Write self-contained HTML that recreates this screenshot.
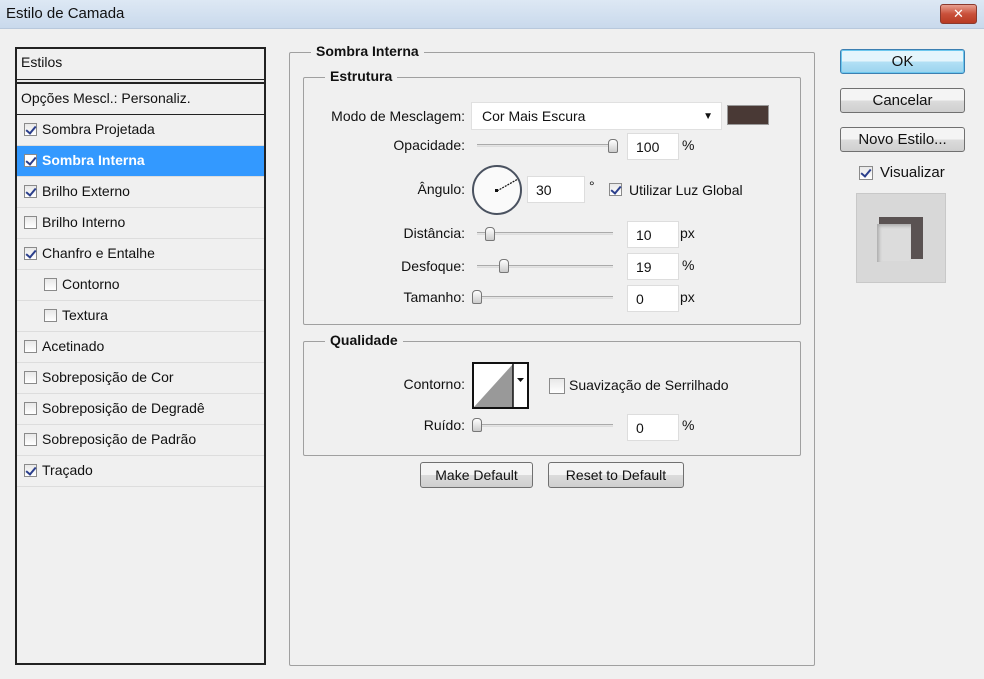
<!DOCTYPE html>
<html><head><meta charset="utf-8"><style>
*{margin:0;padding:0;box-sizing:border-box}
body{width:984px;height:679px;background:#f0f0f0;font-family:"Liberation Sans","DejaVu Sans",sans-serif;font-size:14px;color:#111;position:relative;overflow:hidden}
.a{position:absolute;white-space:nowrap}
.title{left:0;top:0;width:984px;height:29px;background:linear-gradient(#dde8f4,#c9d9ec);border-bottom:1px solid #b8c8dc}
.cb{position:absolute;width:13px;height:13px;border:1px solid #8a8a8a;background:linear-gradient(#e8e8e8,#fff)}
.cb.on::after{content:"";position:absolute;left:3px;top:0px;width:4px;height:8px;border:solid #2b3f8c;border-width:0 2px 2px 0;transform:rotate(40deg)}
.row{position:absolute;left:17px;width:247px;height:31px;border-bottom:1px solid #ddd;font-size:14px;line-height:28px}
.grp{position:absolute;border:1px solid #a0a0a0;border-radius:2px}
.lg{position:absolute;background:#f0f0f0;padding:0 5px;font-weight:bold;font-size:14px}
.lbl{position:absolute;text-align:right;width:200px;font-size:14px}
.inp{position:absolute;background:#fff;border:1px solid #ddd;width:52px;height:27px;padding-left:8px;line-height:27px;font-size:14px}
.sl{position:absolute;height:3px;border-top:1px solid #aaa;border-bottom:1px solid #ddd;background:#e4e4e4}
.th{position:absolute;width:10px;height:14px;border:1px solid #777;border-radius:4px 4px 2px 2px;background:linear-gradient(#fff,#ccc)}
.btn{position:absolute;border:1px solid #707070;border-radius:3px;background:linear-gradient(#f4f4f4 50%,#dcdcdc 50%,#cfcfcf);text-align:center;font-size:14px}
</style></head><body>
<div class="a title"></div>
<div class="a" style="left:6px;top:5px;font-size:15px">Estilo de Camada</div>
<div class="a" style="left:940px;top:4px;width:37px;height:20px;border:1px solid #8a3a2e;border-radius:3px;background:linear-gradient(#e8a090,#c9503a 50%,#b83a22);color:#fff;font-weight:bold;text-align:center;line-height:18px;font-size:13px">✕</div>

<div class="a" style="left:15px;top:47px;width:251px;height:618px;border:2px solid #222;background:#f0f0f0"></div>
<div class="a" style="left:17px;top:79px;width:247px;height:5px;border-top:1px solid #222;border-bottom:2px solid #222;background:#e8e8e8"></div>
<div class="a" style="left:21px;top:54px">Estilos</div>
<div class="a" style="left:21px;top:90px">Opções Mescl.: Personaliz.</div>
<div class="row" style="top:84px;height:31px;border-bottom:1px solid #222"></div>

<div class="row" style="top:115px"><span class="cb on" style="left:7px;top:8px"></span><span class="a" style="left:25px;top:0">Sombra Projetada</span></div>
<div class="row" style="top:146px;background:#3399ff;color:#fff;font-weight:bold"><span class="cb on" style="left:7px;top:8px;background:#fff"></span><span class="a" style="left:25px;top:0">Sombra Interna</span></div>
<div class="row" style="top:177px"><span class="cb on" style="left:7px;top:8px"></span><span class="a" style="left:25px;top:0">Brilho Externo</span></div>
<div class="row" style="top:208px"><span class="cb" style="left:7px;top:8px"></span><span class="a" style="left:25px;top:0">Brilho Interno</span></div>
<div class="row" style="top:239px"><span class="cb on" style="left:7px;top:8px"></span><span class="a" style="left:25px;top:0">Chanfro e Entalhe</span></div>
<div class="row" style="top:270px"><span class="cb" style="left:27px;top:8px"></span><span class="a" style="left:45px;top:0">Contorno</span></div>
<div class="row" style="top:301px"><span class="cb" style="left:27px;top:8px"></span><span class="a" style="left:45px;top:0">Textura</span></div>
<div class="row" style="top:332px"><span class="cb" style="left:7px;top:8px"></span><span class="a" style="left:25px;top:0">Acetinado</span></div>
<div class="row" style="top:363px"><span class="cb" style="left:7px;top:8px"></span><span class="a" style="left:25px;top:0">Sobreposição de Cor</span></div>
<div class="row" style="top:394px"><span class="cb" style="left:7px;top:8px"></span><span class="a" style="left:25px;top:0">Sobreposição de Degradê</span></div>
<div class="row" style="top:425px"><span class="cb" style="left:7px;top:8px"></span><span class="a" style="left:25px;top:0">Sobreposição de Padrão</span></div>
<div class="row" style="top:456px"><span class="cb on" style="left:7px;top:8px"></span><span class="a" style="left:25px;top:0">Traçado</span></div>

<div class="grp" style="left:289px;top:52px;width:526px;height:614px"></div>
<div class="lg" style="left:311px;top:43px">Sombra Interna</div>
<div class="grp" style="left:303px;top:77px;width:498px;height:248px"></div>
<div class="lg" style="left:325px;top:68px">Estrutura</div>

<div class="lbl" style="left:265px;top:108px">Modo de Mesclagem:</div>
<div class="a" style="left:471px;top:102px;width:251px;height:28px;background:#fff;border:1px solid #e0e0e0;padding-left:10px;line-height:27px">Cor Mais Escura<span style="position:absolute;right:8px;top:0;font-size:10px">▼</span></div>
<div class="a" style="left:727px;top:105px;width:42px;height:20px;background:#493935;border:1px solid #999"></div>

<div class="lbl" style="left:265px;top:137px">Opacidade:</div>
<div class="sl" style="left:477px;top:144px;width:140px"></div><div class="th" style="left:608px;top:139px"></div>
<div class="inp" style="left:627px;top:133px">100</div><div class="a" style="left:682px;top:137px">%</div>

<div class="lbl" style="left:265px;top:181px">Ângulo:</div>
<svg class="a" style="left:471px;top:164px" width="54" height="54"><circle cx="26" cy="26" r="24" fill="#fafafa" stroke="#4a5260" stroke-width="2"/><line x1="26" y1="27" x2="47" y2="15" stroke="#111" stroke-width="1.2" stroke-dasharray="2 1"/><rect x="24" y="25" width="3" height="3" fill="#111"/></svg>
<div class="inp" style="left:527px;top:176px;width:58px">30</div>
<div class="a" style="left:589px;top:178px">°</div>
<span class="cb on" style="left:609px;top:183px"></span><div class="a" style="left:629px;top:182px">Utilizar Luz Global</div>

<div class="lbl" style="left:265px;top:225px">Distância:</div>
<div class="sl" style="left:477px;top:232px;width:136px"></div><div class="th" style="left:485px;top:227px"></div>
<div class="inp" style="left:627px;top:221px">10</div><div class="a" style="left:680px;top:225px">px</div>

<div class="lbl" style="left:265px;top:258px">Desfoque:</div>
<div class="sl" style="left:477px;top:265px;width:136px"></div><div class="th" style="left:499px;top:259px"></div>
<div class="inp" style="left:627px;top:253px">19</div><div class="a" style="left:682px;top:257px">%</div>

<div class="lbl" style="left:265px;top:289px">Tamanho:</div>
<div class="sl" style="left:477px;top:296px;width:136px"></div><div class="th" style="left:472px;top:290px"></div>
<div class="inp" style="left:627px;top:285px">0</div><div class="a" style="left:680px;top:289px">px</div>

<div class="grp" style="left:303px;top:341px;width:498px;height:115px"></div>
<div class="lg" style="left:325px;top:332px">Qualidade</div>
<div class="lbl" style="left:265px;top:376px">Contorno:</div>
<svg class="a" style="left:472px;top:362px" width="57" height="47"><rect x="1" y="1" width="55" height="45" fill="#fff" stroke="#111" stroke-width="2"/><polygon points="2,45 41,2 41,45" fill="#999"/><line x1="41" y1="1" x2="41" y2="46" stroke="#111" stroke-width="1.5"/><polygon points="45,16 52,16 48.5,20" fill="#111"/></svg>
<span class="cb" style="left:549px;top:378px;width:16px;height:16px"></span><div class="a" style="left:569px;top:377px">Suavização de Serrilhado</div>
<div class="lbl" style="left:265px;top:417px">Ruído:</div>
<div class="sl" style="left:477px;top:424px;width:136px"></div><div class="th" style="left:472px;top:418px"></div>
<div class="inp" style="left:627px;top:414px">0</div><div class="a" style="left:682px;top:417px">%</div>

<div class="btn" style="left:420px;top:462px;width:113px;height:26px;line-height:24px">Make Default</div>
<div class="btn" style="left:548px;top:462px;width:136px;height:26px;line-height:24px">Reset to Default</div>

<div class="btn" style="left:840px;top:49px;width:125px;height:25px;line-height:23px;border-color:#3c7fb1;background:linear-gradient(#e5f5fc 50%,#b3e0f5 50%,#9ad3ee);box-shadow:0 0 0 1px #6cc7ee inset;font-size:15px">OK</div>
<div class="btn" style="left:840px;top:88px;width:125px;height:25px;line-height:23px;font-size:15px">Cancelar</div>
<div class="btn" style="left:840px;top:127px;width:125px;height:25px;line-height:23px;font-size:15px">Novo Estilo...</div>
<span class="cb on" style="left:859px;top:166px;width:14px;height:14px"></span><div class="a" style="left:880px;top:164px;font-size:15px">Visualizar</div>
<div class="a" style="left:856px;top:193px;width:90px;height:90px;background:#d8d8d8;border:1px solid #c8c8c8"></div>
<div class="a" style="left:879px;top:217px;width:44px;height:42px;background:#5a5252"></div>
<div class="a" style="left:877px;top:224px;width:34px;height:38px;background:#dcdcdc;box-shadow:inset 2px 2px 3px #aaa"></div>
</body></html>
